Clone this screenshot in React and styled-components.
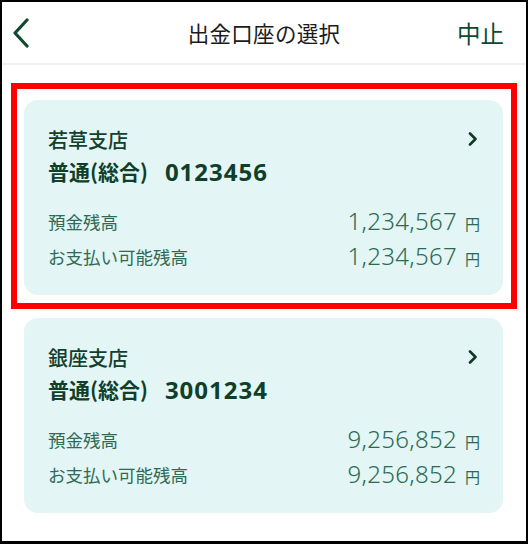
import React from "react";
import styled, { createGlobalStyle } from "styled-components";

const Global = createGlobalStyle`
  html, body { margin: 0; padding: 0; background: #fff; }
  * { box-sizing: border-box; }
`;

const Frame = styled.div`
  width: 528px;
  height: 544px;
  border: 2px solid #000;
  border-bottom-width: 3px;
  background: #fff;
  overflow: hidden;
  font-family: "Noto Sans", "Noto Sans CJK JP", sans-serif;
`;

const Header = styled.header`
  height: 63px;
  border-bottom: 2px solid #efefef;
  display: grid;
  grid-template-columns: 80px 1fr 80px;
  align-items: center;
`;

const BackButton = styled.button`
  border: none;
  background: none;
  padding: 0 0 0 9px;
  height: 100%;
  display: flex;
  align-items: center;
  justify-content: flex-start;
  cursor: pointer;
`;

const Title = styled.h1`
  margin: 0;
  text-align: center;
  font-family: "Noto Sans CJK JP", sans-serif;
  font-weight: 400;
  font-size: 21.5px;
  color: #1b1b1b;
  letter-spacing: 0.3px;
`;

const Cancel = styled.button`
  border: none;
  background: none;
  padding: 0 22px 0 0;
  justify-self: end;
  font-family: "Noto Sans CJK JP", sans-serif;
  font-size: 23.5px;
  color: #0d4a2e;
  cursor: pointer;
`;

const List = styled.div`
  display: flex;
  flex-direction: column;
  gap: 23px;
  padding: 35px 23px 0 22px;
`;

const CardWrap = styled.div`
  position: relative;
`;

const Highlight = styled.div`
  position: absolute;
  top: -17px;
  left: -13px;
  right: -14px;
  bottom: -14px;
  border: 6px solid #ff0000;
  pointer-events: none;
`;

const Card = styled.div`
  background: #e3f5f4;
  border-radius: 14px;
  padding: 24px 25px 21px 24px;
  height: 195px;
`;

const BranchRow = styled.div`
  height: 30px;
  display: flex;
  align-items: center;
  justify-content: space-between;
`;

const Branch = styled.div`
  font-family: "Noto Sans CJK JP", sans-serif;
  font-size: 20px;
  font-weight: 500;
  color: #12402c;
`;

const Account = styled.div`
  height: 34px;
  display: flex;
  align-items: center;
  gap: 17px;
  font-weight: 700;
  color: #0f3f2a;
  margin-bottom: 16px;
`;

const AccountType = styled.span`
  font-family: "Noto Sans CJK JP", sans-serif;
  font-size: 21px;
  font-weight: 700;
`;

const AccountNo = styled.span`
  font-family: "Noto Sans", sans-serif;
  font-weight: 700;
  font-size: 24px;
  letter-spacing: 1px;
`;

const BalanceRow = styled.div`
  height: 35px;
  display: flex;
  align-items: center;
  justify-content: space-between;
`;

const Label = styled.span`
  font-family: "Noto Sans CJK JP", sans-serif;
  font-size: 17.5px;
  color: #2f6a55;
`;

const Amount = styled.span`
  display: flex;
  align-items: baseline;
  gap: 8px;
  color: #2a6a52;
  margin-right: -2px;
  margin-top: -2px;
`;

const Value = styled.span`
  font-family: "Noto Sans", sans-serif;
  font-weight: 300;
  font-size: 24px;
  letter-spacing: 0.3px;
`;

const Yen = styled.span`
  font-family: "Noto Sans CJK JP", sans-serif;
  font-size: 15px;
`;

const Chevron = () => (
  <svg width="10" height="14" viewBox="0 0 10 14">
    <path d="M2 1.5 L7.5 7 L2 12.5" fill="none" stroke="#0f3a26" strokeWidth="2.6" strokeLinecap="round" strokeLinejoin="round" />
  </svg>
);

const BackIcon = () => (
  <svg width="20" height="30" viewBox="0 0 20 30">
    <path d="M16 2 L4 15 L16 28" fill="none" stroke="#0d4a2e" strokeWidth="3.2" strokeLinecap="round" strokeLinejoin="round" />
  </svg>
);

const accounts = [
  { branch: "若草支店", no: "0123456", balance: "1,234,567", available: "1,234,567", selected: true },
  { branch: "銀座支店", no: "3001234", balance: "9,256,852", available: "9,256,852" },
];

const AccountCard = ({ a }) => (
  <CardWrap>
    <Card>
      <BranchRow>
        <Branch>{a.branch}</Branch>
        <Chevron />
      </BranchRow>
      <Account>
        <AccountType>普通(総合)</AccountType>
        <AccountNo>{a.no}</AccountNo>
      </Account>
      <BalanceRow>
        <Label>預金残高</Label>
        <Amount><Value>{a.balance}</Value><Yen>円</Yen></Amount>
      </BalanceRow>
      <BalanceRow>
        <Label>お支払い可能残高</Label>
        <Amount><Value>{a.available}</Value><Yen>円</Yen></Amount>
      </BalanceRow>
    </Card>
    {a.selected && <Highlight />}
  </CardWrap>
);

export default function App() {
  return (
    <Frame>
      <Global />
      <Header>
        <BackButton aria-label="戻る"><BackIcon /></BackButton>
        <Title>出金口座の選択</Title>
        <Cancel>中止</Cancel>
      </Header>
      <List>
        {accounts.map((a) => <AccountCard key={a.no} a={a} />)}
      </List>
    </Frame>
  );
}
